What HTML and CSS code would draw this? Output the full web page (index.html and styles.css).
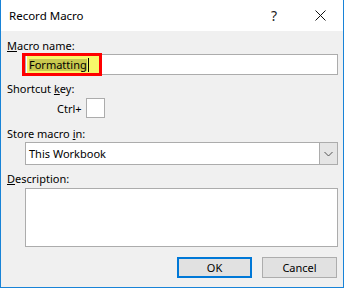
FILE: index.html
```html
<!DOCTYPE html>
<html>
<head>
<meta charset="utf-8">
<link rel="stylesheet" href="styles.css">
</head>
<body>
<div class="window">
  <div class="titlebar">
    <div class="title">Record Macro</div>
    <div class="tbtn help">?</div>
    <div class="tbtn close">
      <svg width="11" height="11" viewBox="0 0 11 11"><path d="M0.5 0.5 L10.5 10.5 M10.5 0.5 L0.5 10.5" stroke="#111" stroke-width="1" fill="none"/></svg>
    </div>
  </div>
  <div class="content">
    <div class="label first"><u>M</u>acro name:</div>
    <div class="field name-field">
      <div class="name-text"><span class="hl"><span class="sel">Formatting</span><span class="caret"></span></span></div>
      <div class="redbox"></div>
    </div>
    <div class="label l2">Shortcut <u>k</u>ey:</div>
    <div class="ctrl-row">
      <span class="ctrl">Ctrl+</span>
      <div class="keybox"></div>
    </div>
    <div class="label l3">Store macro <u>i</u>n:</div>
    <div class="field select">
      <div class="select-text">This Workbook</div>
      <div class="dropbtn">
        <svg width="9" height="6" viewBox="0 0 9 6"><path d="M0.5 1 L4.5 5 L8.5 1" stroke="#555" stroke-width="1" fill="none"/></svg>
      </div>
    </div>
    <div class="label l4"><u>D</u>escription:</div>
    <div class="field textarea"></div>
    <div class="buttons">
      <div class="btn ok">OK</div>
      <div class="btn cancel">Cancel</div>
    </div>
  </div>
</div>
</body>
</html>
```
FILE: styles.css
```css
html, body {
  margin: 0;
  padding: 0;
}
body {
  width: 344px;
  height: 288px;
  font-family: "Noto Sans", "Open Sans", sans-serif;
  font-size: 11px;
  color: #000;
  overflow: hidden;
}
.window {
  width: 344px;
  height: 288px;
  box-sizing: border-box;
  border: 1px solid #1883d7;
  border-top: none;
  display: flex;
  flex-direction: column;
  background: #f0f0f0;
}
.titlebar {
  height: 31px;
  flex: none;
  background: #fff;
  display: flex;
  align-items: center;
}
.title {
  flex: 1;
  padding-left: 8px;
  font-size: 11.5px;
  line-height: 15px;
  margin-top: -1px;
}
.tbtn {
  width: 46px;
  height: 31px;
  display: flex;
  align-items: center;
  justify-content: center;
}
.help {
  font-size: 14px;
  color: #222;
  margin-top: -1px;
}
.close svg {
  display: block;
}
.content {
  flex: 1;
  padding: 7px 5px 0 6px;
  display: flex;
  flex-direction: column;
}
.label {
  line-height: 15px;
  height: 15px;
}
.label u {
  text-decoration-thickness: 1px;
  text-underline-offset: 1px;
}
.l2 { margin-top: 6px; }
.l3 { margin-top: 8px; }
.l4 { margin-top: 6px; }
.field {
  margin-left: 18px;
  box-sizing: border-box;
  border: 1px solid #acacac;
  background: #fff;
}
.name-field {
  position: relative;
  margin-top: 1px;
  height: 21px;
  display: flex;
  align-items: center;
}
.name-text {
  padding-left: 1px;
  height: 17px;
  display: flex;
}
.hl {
  background: #f7f76a;
  display: flex;
  align-items: center;
  padding: 0 10px 0 2px;
  height: 17px;
}
.sel {
  background: #c8c84e;
  line-height: 12px;
  height: 12px;
  display: inline-block;
}
.caret {
  display: inline-block;
  width: 1px;
  height: 14px;
  background: #000;
  margin-left: 1px;
}
.redbox {
  position: absolute;
  left: -4px;
  top: -2px;
  width: 80px;
  height: 23px;
  box-sizing: border-box;
  border: 3px solid #ff0000;
}
.ctrl-row {
  margin-top: 2px;
  height: 20px;
  display: flex;
  align-items: center;
  padding-left: 50px;
}
.ctrl {
  line-height: 15px;
  margin-right: 4px;
  margin-top: 1px;
}
.keybox {
  width: 19px;
  height: 20px;
  box-sizing: border-box;
  border: 1px solid #acacac;
  background: #fff;
}
.select {
  margin-top: 1px;
  height: 23px;
  display: flex;
  align-items: center;
}
.select-text {
  flex: 1;
  padding-left: 3px;
  line-height: 15px;
}
.dropbtn {
  width: 18px;
  height: 21px;
  box-sizing: border-box;
  border-left: 1px solid #acacac;
  background: #e5e5e5;
  display: flex;
  align-items: center;
  justify-content: center;
}
.dropbtn svg { display: block; }
.textarea {
  margin-top: 2px;
  height: 59px;
}
.buttons {
  margin-top: 10px;
  display: flex;
  justify-content: flex-end;
  gap: 10px;
  padding-right: 1px;
}
.btn {
  width: 75px;
  height: 21px;
  box-sizing: border-box;
  background: #e1e1e1;
  border: 1px solid #adadad;
  display: flex;
  align-items: center;
  justify-content: center;
  line-height: 15px;
}
.btn.ok {
  border: 2px solid #0078d7;
}
```
